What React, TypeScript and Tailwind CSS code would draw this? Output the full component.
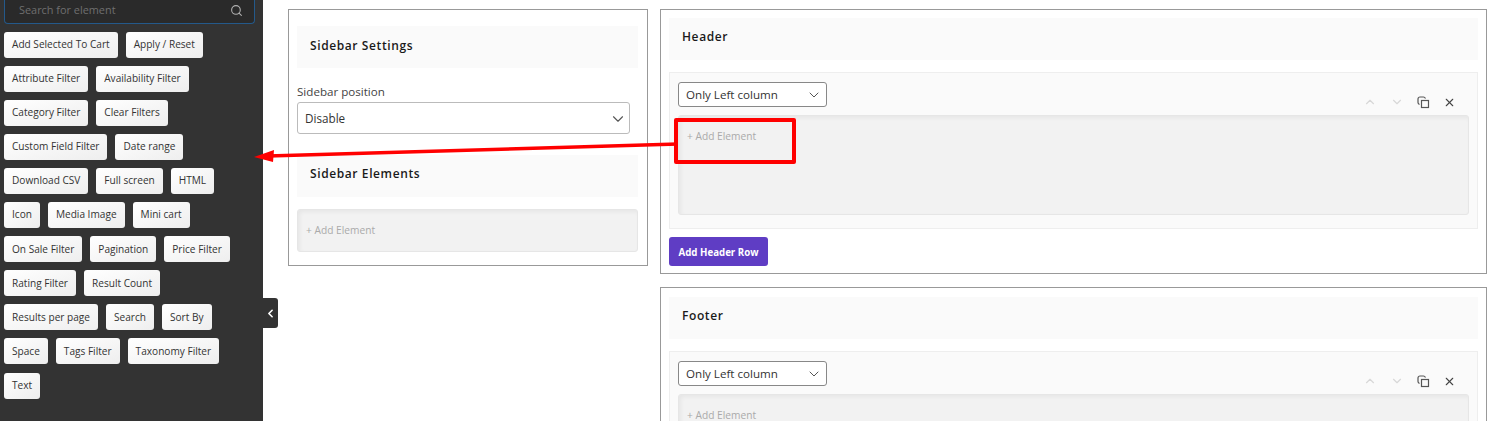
import { ChevronDown, ChevronLeft, ChevronUp, Search, X } from 'lucide-react';

const rows = [
  ['Add Selected To Cart', 'Apply / Reset'],
  ['Attribute Filter', 'Availability Filter'],
  ['Category Filter', 'Clear Filters'],
  ['Custom Field Filter', 'Date range'],
  ['Download CSV', 'Full screen', 'HTML'],
  ['Icon', 'Media Image', 'Mini cart'],
  ['On Sale Filter', 'Pagination', 'Price Filter'],
  ['Rating Filter', 'Result Count'],
  ['Results per page', 'Search', 'Sort By'],
  ['Space', 'Tags Filter', 'Taxonomy Filter'],
  ['Text'],
];

function Sidebar() {
  return (
    <aside className="w-[263px] h-[421px] shrink-0 bg-[#333333] pl-1">
      <div className="w-[251px] h-[24px] flex items-center justify-between pl-[14px] pr-[11px] pb-[2px] bg-[#2a2a2a] border border-t-0 border-[#24598a] rounded-b-[4px]">
        <span className="text-[10.9px] text-[#6f6f6f]">Search for element</span>
        <Search size={13} className="text-[#b0b0b0]" />
      </div>
      <div className="mt-[7.6px] flex flex-col gap-[8.1px]">
        {rows.map((row) => (
          <div key={row[0]} className="flex gap-[8px]">
            {row.map((name) => (
              <div
                key={name}
                className="h-[26px] px-[8px] flex items-center rounded-[3px] bg-gradient-to-br from-white to-[#eeeeee] text-[10.1px] text-[#333333]"
              >
                {name}
              </div>
            ))}
          </div>
        ))}
      </div>
    </aside>
  );
}

function SectionTitle({ title, className = 'pb-[4px]' }: { title: string; className?: string }) {
  return (
    <div className={`h-[42px] flex items-center pl-[13px] bg-[#fafafa] text-[12px] font-semibold tracking-[0.6px] text-[#1a1a1a] ${className}`}>
      {title}
    </div>
  );
}

function DropZone({ className }: { className: string }) {
  return (
    <div className={`bg-[#f2f2f2] border border-[#e6e6e6] rounded-[3px] shadow-[inset_2px_2px_4px_rgba(0,0,0,0.05)] px-[8px] text-[10.2px] leading-[12px] text-[#aaaaaa] ${className}`}>
      + Add Element
    </div>
  );
}

function ColumnRow() {
  return (
    <div className="mt-[12px] bg-[#fafafa] border border-[#eeeeee] px-[8px] pt-[9px] pb-[13px]">
      <div className="h-[25px] flex items-start justify-between">
        <div className="w-[149px] h-[25px] flex items-center justify-between pl-[7px] pr-[4px] bg-white border border-[#888888] rounded-[3px] text-[11.6px] text-[#333333]">
          Only Left column
          <ChevronDown size={16} strokeWidth={1.5} className="text-[#555555]" />
        </div>
        <div className="flex items-center gap-[13px] mt-[13px] pr-[13px]">
          <ChevronUp size={14} className="text-[#d8d8d8]" />
          <ChevronDown size={14} className="text-[#d8d8d8]" />
          <svg width="13" height="13" viewBox="0 0 13 13" fill="none" stroke="#555555" strokeWidth="1.2">
            <rect x="4.5" y="4.5" width="7" height="7" />
            <path d="M2.5 8.5 C1.5 8 1 7.5 1 6.5 V3 C1 1.8 1.8 1 3 1 H6.5 C7.5 1 8 1.5 8.5 2.5" />
          </svg>
          <X size={13} className="text-[#444444]" />
        </div>
      </div>
      <DropZone className="mt-[8px] h-[100px] pt-[14px]" />
    </div>
  );
}

export default function App() {
  return (
    <div className="relative w-[1500px] h-[421px] overflow-hidden bg-white flex font-['Open_Sans',sans-serif]">
      <Sidebar />
      <div className="flex items-start gap-[12px] ml-[25px] mt-[9px]">
        <div className="w-[360px] h-[257px] shrink-0 border border-[#999999] pl-[8px] pr-[9px] pt-[16px]">
          <SectionTitle title="Sidebar Settings" className="pb-[2px]" />
          <div className="mt-[15px] text-[11.6px] leading-[17px] text-[#444444]">Sidebar position</div>
          <div className="w-[333px] h-[32px] mt-[2px] flex items-center justify-between pl-[7px] pr-[2px] pt-[1px] border border-[#bbbbbb] rounded-[3px] text-[11.7px] text-[#333333]">
            Disable
            <ChevronDown size={18} strokeWidth={1.5} className="text-[#555555]" />
          </div>
          <div className="mt-[21px]">
            <SectionTitle title="Sidebar Elements" />
          </div>
          <DropZone className="mt-[12px] h-[43px] flex items-center pb-[2px]" />
        </div>
        <div className="w-[827px] shrink-0 flex flex-col gap-[13px]">
          <div className="h-[265px] border border-[#999999] px-[8px] pt-[8px]">
            <SectionTitle title="Header" />
            <ColumnRow />
            <div className="mt-[8px] w-[99px] h-[29px] pt-[3px] flex items-center justify-center rounded-[3px] bg-[#5f3dc4] text-[9.7px] font-bold text-white">
              Add Header Row
            </div>
          </div>
          <div className="h-[265px] border border-[#999999] px-[8px] pt-[9px]">
            <SectionTitle title="Footer" />
            <ColumnRow />
          </div>
        </div>
      </div>
      <div className="absolute left-[263px] top-[298px] w-[15px] h-[30px] flex items-center justify-center bg-[#333333] rounded-r-[3px]">
        <ChevronLeft size={13} strokeWidth={3} className="text-white" />
      </div>
      <div className="absolute left-[674px] top-[118px] w-[122px] h-[46px] border-[4px] border-[#ff0000] rounded-[2px]" />
      <svg className="absolute left-[250px] top-[140px]" width="430" height="30" viewBox="0 0 430 30">
        <line x1="428" y1="4" x2="18" y2="16" stroke="#ff0000" strokeWidth="3.5" />
        <polygon points="4,17 24,10 23,22" fill="#ff0000" />
      </svg>
    </div>
  );
}
